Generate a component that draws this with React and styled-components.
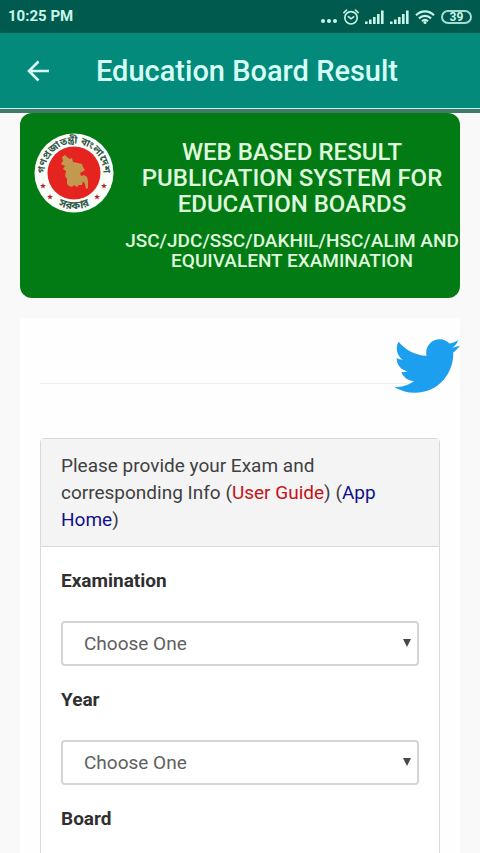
import React, { useState } from 'react';
import styled, { createGlobalStyle } from 'styled-components';
import { FaTwitter } from 'react-icons/fa';

const FIELDS = [
  { id: 'examination', label: 'Examination' },
  { id: 'year', label: 'Year' },
  { id: 'board', label: 'Board' }
];

const SignalIcon = () => (
  <svg width="19" height="14" viewBox="0 0 19 14" fill="currentColor" aria-hidden="true">
    <rect x="0" y="11.5" width="2.6" height="2.5" />
    <rect x="4" y="9.5" width="2.6" height="4.5" />
    <rect x="8" y="7" width="2.6" height="7" />
    <rect x="12" y="4" width="2.6" height="10" />
    <rect x="16" y="0.5" width="2.6" height="13.5" />
  </svg>
);

const DotsIcon = () => (
  <svg width="16" height="16" viewBox="0 0 16 16" fill="currentColor" aria-hidden="true">
    <circle cx="2" cy="12" r="2" />
    <circle cx="8" cy="12" r="2" />
    <circle cx="14" cy="12" r="2" />
  </svg>
);

const AlarmIcon = () => (
  <svg width="16" height="16" viewBox="0 0 16 16" fill="none" stroke="currentColor" strokeWidth="1.6" strokeLinecap="round" aria-hidden="true">
    <circle cx="8" cy="8.8" r="6.2" />
    <path d="M0.9 3.6L3.6 1M15.1 3.6L12.4 1M5.4 7.6L8 9.8L10.6 7.8" />
  </svg>
);

const WifiIcon = () => (
  <svg width="20" height="14" viewBox="0 0 20 14" fill="none" stroke="currentColor" strokeWidth="2.2" aria-hidden="true">
    <path d="M1 5.2C6 0 14 0 19 5.2" />
    <path d="M4 8.4C7.4 5 12.6 5 16 8.4" />
    <path d="M7 11.2C8.8 9.5 11.2 9.5 13 11.2" />
    <circle cx="10" cy="12.4" r="1.5" fill="currentColor" stroke="none" />
  </svg>
);

const BackIcon = () => (
  <svg width="22" height="22" viewBox="0 0 22 22" fill="none" stroke="currentColor" strokeWidth="2.6" aria-hidden="true">
    <path d="M22 11H2.5M11.5 1.5L2 11L11.5 20.5" />
  </svg>
);

const star = 'M0 -3L0.8 -1L3 -0.9L1.2 0.4L1.9 2.5L0 1.3L-1.9 2.5L-1.2 0.4L-3 -0.9L-0.8 -1Z';

const Emblem = () => (
  <svg width="80" height="80" viewBox="0 0 80 80" role="img" aria-label="Government emblem">
    <defs>
      <path id="ringTop" d="M11.7 47A29.2 29.2 0 1 1 68.3 47" />
      <path id="ringBottom" d="M12 62.6A36 36 0 0 0 68 62.6" />
    </defs>
    <circle cx="40" cy="40" r="39.5" fill="#fbfffa" />
    <circle cx="40" cy="40" r="26.5" fill="#e5231f" />
    <path
      fill="#c2994f"
      d="M28 24L31 22L33 24L36 26L38 25L39 29L44 30L48 31L49 34L51 37L48 39L46 40L47 43L50 42L53 44L54 48L54 55L52 56L51 51L49 48L48 52L45 52L43 54L40 52L38 54L35 53L33 51L33 46L31 43L32 38L29 36L31 33L27 31L29 28Z"
    />
    <TopText>
      <textPath href="#ringTop" startOffset="50%" textAnchor="middle">গণপ্রজাতন্ত্রী বাংলাদেশ</textPath>
    </TopText>
    <BottomText>
      <textPath href="#ringBottom" startOffset="50%" textAnchor="middle">সরকার</textPath>
    </BottomText>
    <g fill="#b8232b">
      <path d={star} transform="translate(9 53)" />
      <path d={star} transform="translate(16 64)" />
      <path d={star} transform="translate(63 64)" />
      <path d={star} transform="translate(70 53)" />
    </g>
  </svg>
);

const App = () => {
  const [values, setValues] = useState({ examination: '', year: '', board: '' });

  const handleChange = (e) => {
    const { name, value } = e.target;
    setValues({ ...values, [name]: value });
  };

  return (
    <Screen>
      <GlobalStyle />
      <StatusBar>
        <span>10:25 PM</span>
        <StatusIcons>
          <DotsIcon />
          <AlarmIcon />
          <SignalIcon />
          <SignalIcon />
          <WifiIcon />
          <Battery>39</Battery>
        </StatusIcons>
      </StatusBar>
      <AppBar>
        <BackButton type="button" aria-label="Back">
          <BackIcon />
        </BackButton>
        <AppTitle>Education Board Result</AppTitle>
      </AppBar>
      <Content>
        <Banner>
          <Emblem />
          <BannerText>
            <BannerTitle>WEB BASED RESULT PUBLICATION SYSTEM FOR EDUCATION BOARDS</BannerTitle>
            <BannerSubtitle>JSC/JDC/SSC/DAKHIL/HSC/ALIM AND EQUIVALENT EXAMINATION</BannerSubtitle>
          </BannerText>
        </Banner>
        <Card>
          <Share>
            <TwitterLink href="#twitter" aria-label="Twitter">
              <FaTwitter size={66} />
            </TwitterLink>
          </Share>
          <Panel>
            <PanelHeader>
              Please provide your Exam and corresponding Info (
              <GuideLink href="#guide">User Guide</GuideLink>) (<HomeLink href="#home">App Home</HomeLink>)
            </PanelHeader>
            <Form>
              {FIELDS.map((field) => (
                <Field key={field.id}>
                  <Label htmlFor={field.id}>{field.label}</Label>
                  <SelectBox>
                    <Select id={field.id} name={field.id} value={values[field.id]} onChange={handleChange}>
                      <option value="">Choose One</option>
                    </Select>
                    <Arrow viewBox="0 0 8 8" aria-hidden="true">
                      <path d="M0 0H8L4 8Z" fill="currentColor" />
                    </Arrow>
                  </SelectBox>
                </Field>
              ))}
            </Form>
          </Panel>
        </Card>
      </Content>
    </Screen>
  );
};

export default App;

const GlobalStyle = createGlobalStyle`
  * {
    box-sizing: border-box;
  }

  body {
    margin: 0;
    background: #f9f9f9;
    color: #404040;
    font-family: Roboto, "Liberation Sans", sans-serif;
    font-size: 19px;
    line-height: 27px;
  }
`;

const Screen = styled.div`
  display: flex;
  flex-direction: column;
  height: 100vh;
`;

const StatusBar = styled.div`
  display: flex;
  flex-shrink: 0;
  align-items: center;
  justify-content: space-between;
  height: 33px;
  padding: 0 8px;
  background: #005a4d;
  color: #c8f5ea;
  font-size: 15px;
  font-weight: 700;
`;

const StatusIcons = styled.div`
  display: flex;
  align-items: center;
  gap: 6px;
`;

const Battery = styled.span`
  width: 31px;
  height: 14px;
  border: 2px solid #a5dccf;
  border-radius: 7px;
  font-size: 12px;
  font-weight: 700;
  line-height: 10px;
  text-align: center;
`;

const AppBar = styled.header`
  display: flex;
  flex-shrink: 0;
  align-items: center;
  gap: 37px;
  height: 76px;
  padding: 0 16px;
  background: #048a7a;
  border-bottom: 1px solid #c4f2e6;
  color: #d5fff6;
`;

const BackButton = styled.button`
  display: flex;
  align-items: center;
  justify-content: center;
  width: 43px;
  height: 44px;
  padding: 0;
  background: none;
  border: none;
  color: inherit;
  cursor: pointer;
`;

const AppTitle = styled.h1`
  margin: 0;
  font-size: 29px;
  font-weight: 500;
  line-height: 36px;
`;

const Content = styled.main`
  flex: 1;
  padding: 0 20px;
  border-top: 4px solid #43796b;
  overflow-y: auto;
  scrollbar-width: none;
`;

const Banner = styled.section`
  display: flex;
  align-items: flex-start;
  gap: 10px;
  padding: 20px 0 27px 14px;
  background: #037b15;
  border-radius: 12px;
  color: #dff9dc;

  & > svg {
    flex-shrink: 0;
  }
`;

const EmblemText = styled.text`
  fill: #35594a;
  font-family: "Noto Sans Bengali", "Noto Sans", sans-serif;
  font-weight: 700;
`;

const TopText = styled(EmblemText)`
  font-size: 10px;
`;

const BottomText = styled(EmblemText)`
  font-size: 11px;
`;

const BannerText = styled.div`
  flex: 1;
  padding-top: 6px;
  text-align: center;
`;

const BannerTitle = styled.h2`
  margin: 0 0 14px;
  padding: 0 12px;
  font-size: 24px;
  font-weight: 500;
  line-height: 26px;
`;

const BannerSubtitle = styled.h3`
  margin: 0;
  font-size: 19px;
  font-weight: 500;
  line-height: 20px;
`;

const Card = styled.section`
  margin-top: 20px;
  padding: 20px;
  background: #fefefe;
`;

const Share = styled.div`
  position: relative;
  height: 46px;
  margin-bottom: 54px;
  border-bottom: 1px solid #eee;
`;

const TwitterLink = styled.a`
  position: absolute;
  top: -5px;
  right: -20px;
  display: flex;
  color: #1d9ff0;
`;

const Panel = styled.div`
  border: 1px solid #d9d9d9;
  border-radius: 4px;
  background: #fff;
`;

const PanelHeader = styled.div`
  padding: 13px 20px;
  background: #f4f4f4;
  border-bottom: 1px solid #d9d9d9;
`;

const GuideLink = styled.a`
  color: #c41218;
  text-decoration: none;
`;

const HomeLink = styled.a`
  color: #10108c;
  text-decoration: none;
`;

const Form = styled.form`
  display: flex;
  flex-direction: column;
  gap: 20px;
  padding: 20px;
`;

const Field = styled.div`
  display: flex;
  flex-direction: column;
  gap: 27px;
`;

const Label = styled.label`
  color: #303030;
  font-weight: 700;
`;

const SelectBox = styled.div`
  position: relative;
`;

const Select = styled.select`
  display: block;
  width: 100%;
  height: 45px;
  padding: 0 21px;
  appearance: none;
  background: #fff;
  border: 2px solid #d4d4d4;
  border-radius: 4px;
  color: #606060;
  font: inherit;
`;

const Arrow = styled.svg`
  position: absolute;
  top: 18px;
  right: 8px;
  width: 8px;
  height: 8px;
  color: #484848;
  pointer-events: none;
`;
